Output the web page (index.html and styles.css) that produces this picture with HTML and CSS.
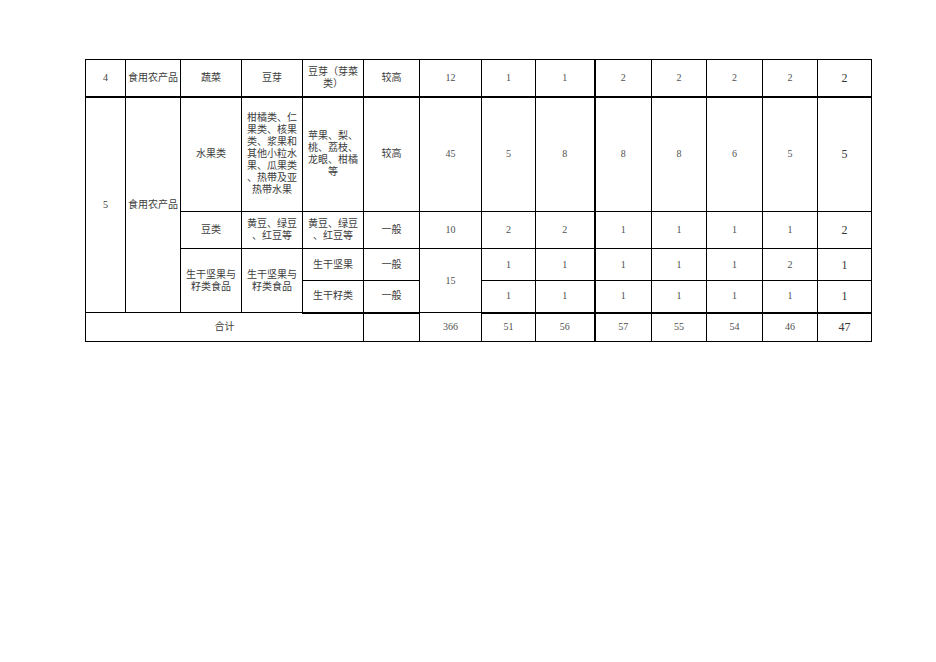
FILE: index.html
```html
<!DOCTYPE html>
<html lang="zh-CN">
<head>
<meta charset="utf-8">
<title>抽检计划表</title>
<link rel="stylesheet" href="styles.css">
</head>
<body>
<div class="page">
<table class="sheet">
<colgroup>
<col class="w40"><col class="w55"><col class="w61"><col class="w61"><col class="w61"><col class="w56"><col class="w62"><col class="w54"><col class="w59"><col class="w57"><col class="w55"><col class="w56"><col class="w55"><col class="w54">
</colgroup>
<tbody>
<tr class="r1 thick-bottom">
<td>4</td><td>食用农产品</td><td>蔬菜</td><td>豆芽</td><td class="para">豆芽（芽菜<br>类）</td><td>较高</td>
<td class="num">12</td><td class="num">1</td><td class="num">1</td><td class="num tk">2</td><td class="num">2</td><td class="num">2</td><td class="num">2</td><td class="num big">2</td>
</tr>
<tr class="r2">
<td rowspan="4">5</td><td rowspan="4">食用农产品</td><td>水果类</td>
<td class="para">柑橘类、仁<br>果类、核果<br>类、浆果和<br>其他小粒水<br>果、瓜果类<br>、热带及亚<br>热带水果</td>
<td class="para">苹果、梨、<br>桃、荔枝、<br>龙眼、柑橘<br>等</td><td>较高</td>
<td class="num">45</td><td class="num">5</td><td class="num">8</td><td class="num tk">8</td><td class="num">8</td><td class="num">6</td><td class="num">5</td><td class="num big">5</td>
</tr>
<tr class="r3">
<td>豆类</td><td class="para">黄豆、绿豆<br>、红豆等</td><td class="para">黄豆、绿豆<br>、红豆等</td><td>一般</td>
<td class="num">10</td><td class="num">2</td><td class="num">2</td><td class="num tk">1</td><td class="num">1</td><td class="num">1</td><td class="num">1</td><td class="num big">2</td>
</tr>
<tr class="r4">
<td rowspan="2" class="para">生干坚果与<br>籽类食品</td><td rowspan="2" class="para">生干坚果与<br>籽类食品</td><td>生干坚果</td><td>一般</td>
<td rowspan="2" class="num">15</td><td class="num">1</td><td class="num">1</td><td class="num tk">1</td><td class="num">1</td><td class="num">1</td><td class="num">2</td><td class="num big">1</td>
</tr>
<tr class="r5 thick-bottom">
<td>生干籽类</td><td>一般</td>
<td class="num">1</td><td class="num">1</td><td class="num tk">1</td><td class="num">1</td><td class="num">1</td><td class="num">1</td><td class="num big">1</td>
</tr>
<tr class="r6">
<td colspan="5">合计</td><td></td>
<td class="num">366</td><td class="num">51</td><td class="num">56</td><td class="num tk">57</td><td class="num">55</td><td class="num">54</td><td class="num">46</td><td class="num big">47</td>
</tr>
</tbody>
</table>
</div>
</body>
</html>
```
FILE: styles.css
```css
html, body {
  margin: 0;
  padding: 0;
  background: #ffffff;
}
.page {
  padding: 59px 0 0 85px;
}
.sheet {
  border-collapse: collapse;
  table-layout: fixed;
  width: 787px;
  font-family: "Liberation Serif", "Noto Sans CJK SC", serif;
  font-size: 10px;
  color: #3c3c3c;
}
.w40 { width: 40px; }
.w54 { width: 54px; }
.w55 { width: 55px; }
.w56 { width: 56px; }
.w57 { width: 57px; }
.w59 { width: 59px; }
.w61 { width: 61px; }
.w62 { width: 62px; }
.sheet td {
  border: 1px solid #000000;
  padding: 0 2px;
  text-align: center;
  vertical-align: middle;
  line-height: 12px;
  white-space: nowrap;
  overflow: hidden;
}
.sheet td.para {
  line-height: 12px;
}
.sheet td.num {
  font-size: 10px;
  color: #505050;
}
.sheet td.big {
  font-size: 12px;
  color: #383838;
}
.sheet td.tk {
  border-left: 2px solid #000000;
}
.thick-bottom td {
  border-bottom: 2px solid #000000;
}
.r1 { height: 37px; }
.r2 { height: 115px; }
.r3 { height: 37px; }
.r4 { height: 32px; }
.r5 { height: 32px; }
.r6 { height: 29px; }
```
